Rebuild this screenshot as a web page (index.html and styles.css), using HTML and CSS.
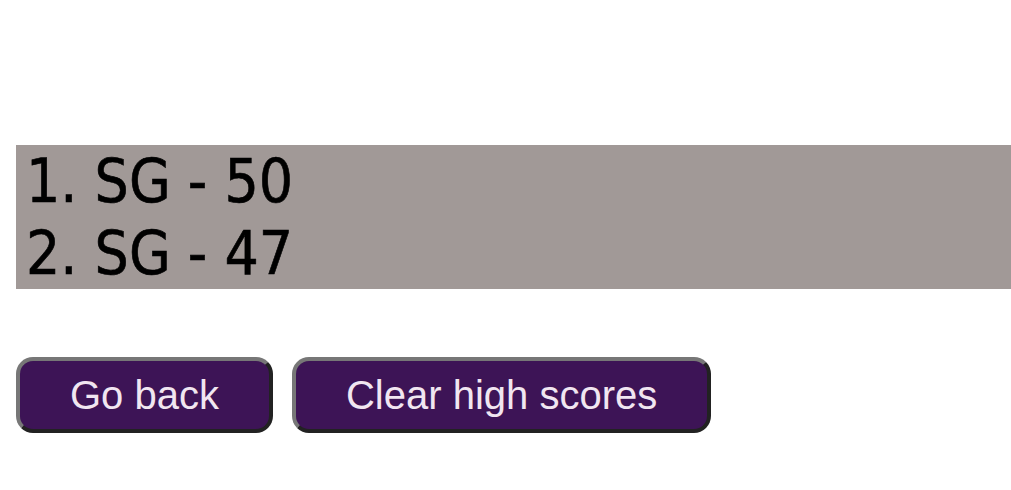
FILE: index.html
```html
<!DOCTYPE html>
<html>
<head>
<meta charset="utf-8">
<link rel="stylesheet" href="styles.css">
</head>
<body>
<main class="page">
  <ol class="scores">
    <li>1. SG - 50</li>
    <li>2. SG - 47</li>
  </ol>
  <div class="actions">
    <button class="btn">Go back</button>
    <button class="btn">Clear high scores</button>
  </div>
</main>
</body>
</html>
```

FILE: styles.css
```css
html, body {
  margin: 0;
  padding: 0;
  background: #ffffff;
}
.page {
  padding: 145px 0 0 16px;
  display: flex;
  flex-direction: column;
}
.scores {
  list-style: none;
  margin: 0;
  padding: 0 0 0 10px;
  background: #a19997;
  font-family: "DejaVu Sans Condensed", "DejaVu Sans", sans-serif;
  font-size: 60px;
  line-height: 72px;
  color: #000;
  -webkit-text-stroke: 0.6px #000;
}
.actions {
  display: flex;
  gap: 19px;
  margin-top: 68px;
}
.btn {
  font-family: "Liberation Sans", Arial, sans-serif;
  font-size: 40px;
  line-height: 46px;
  color: #f1e6f1;
  background: #3d1456;
  border: 4px solid;
  border-color: #777 #222 #222 #777;
  border-radius: 17px;
  padding: 11px 50px;
  margin: 0;
}
```
